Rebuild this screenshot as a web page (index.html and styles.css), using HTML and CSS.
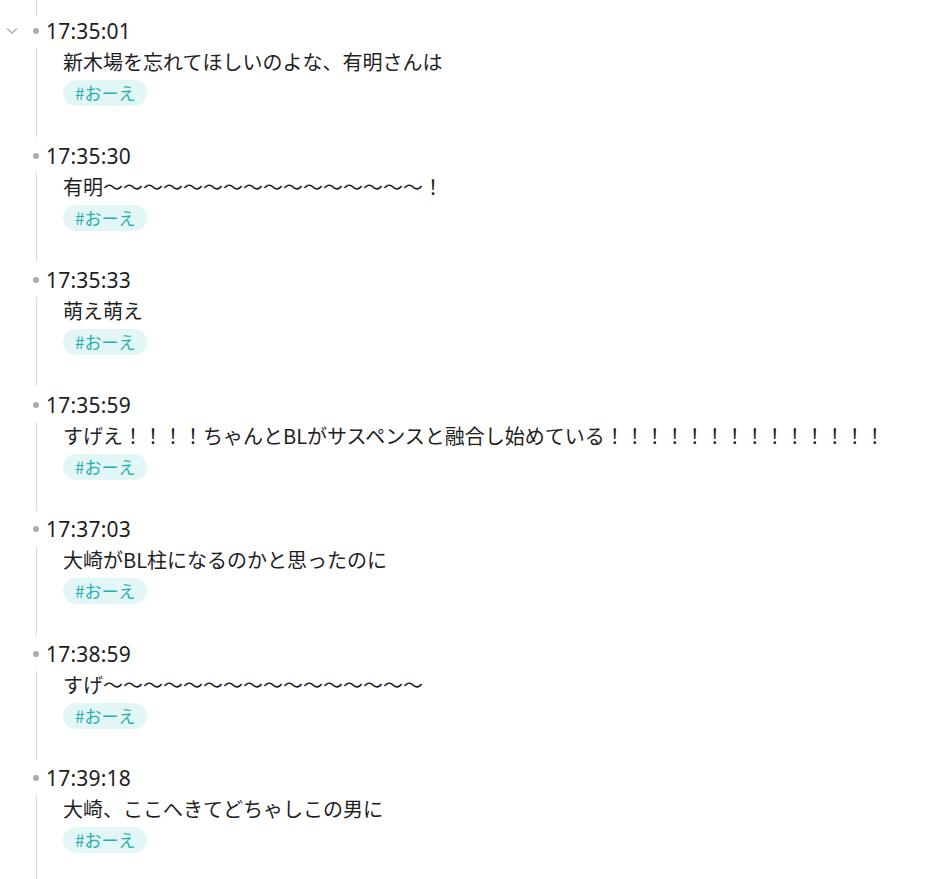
FILE: index.html
```html
<!DOCTYPE html>
<html lang="ja">
<head>
    <meta charset="UTF-8">
    <meta name="viewport" content="width=device-width, initial-scale=1.0">
    <title>Journal</title>
    <link rel="stylesheet" href="styles.css">
</head>
<body>

    <div id="outline">
        <div class="topGuide"></div>

        <div class="block">
            <div class="row">
                <span class="toggle">
                    <svg width="12" height="8" viewBox="0 0 12 8"><polyline points="1,1.5 6,6 11,1.5" fill="none" stroke="#b0b0b0" stroke-width="1.6"/></svg>
                </span>
                <span class="bullet"></span>
                <span class="time">17:35:01</span>
            </div>
            <div class="children">
                <div class="text">新木場を忘れてほしいのよな、有明さんは</div>
                <span class="tag">#おーえ</span>
            </div>
        </div>

        <div class="block">
            <div class="row">
                <span class="toggle"></span>
                <span class="bullet"></span>
                <span class="time">17:35:30</span>
            </div>
            <div class="children">
                <div class="text">有明～～～～～～～～～～～～～～～～！</div>
                <span class="tag">#おーえ</span>
            </div>
        </div>

        <div class="block">
            <div class="row">
                <span class="toggle"></span>
                <span class="bullet"></span>
                <span class="time">17:35:33</span>
            </div>
            <div class="children">
                <div class="text">萌え萌え</div>
                <span class="tag">#おーえ</span>
            </div>
        </div>

        <div class="block">
            <div class="row">
                <span class="toggle"></span>
                <span class="bullet"></span>
                <span class="time">17:35:59</span>
            </div>
            <div class="children">
                <div class="text">すげえ！！！！ちゃんとBLがサスペンスと融合し始めている！！！！！！！！！！！！！！</div>
                <span class="tag">#おーえ</span>
            </div>
        </div>

        <div class="block">
            <div class="row">
                <span class="toggle"></span>
                <span class="bullet"></span>
                <span class="time">17:37:03</span>
            </div>
            <div class="children">
                <div class="text">大崎がBL柱になるのかと思ったのに</div>
                <span class="tag">#おーえ</span>
            </div>
        </div>

        <div class="block">
            <div class="row">
                <span class="toggle"></span>
                <span class="bullet"></span>
                <span class="time">17:38:59</span>
            </div>
            <div class="children">
                <div class="text">すげ～～～～～～～～～～～～～～～～</div>
                <span class="tag">#おーえ</span>
            </div>
        </div>

        <div class="block">
            <div class="row">
                <span class="toggle"></span>
                <span class="bullet"></span>
                <span class="time">17:39:18</span>
            </div>
            <div class="children">
                <div class="text">大崎、ここへきてどちゃしこの男に</div>
                <span class="tag">#おーえ</span>
            </div>
        </div>
    </div>

</body>
</html>
```

FILE: styles.css
```css
body {
    margin: 0;
    background: #ffffff;
    color: #1e1e1e;
    font-family: "Noto Sans", "Noto Sans CJK JP", sans-serif;
}

#outline {
    width: 938px;
}

.topGuide {
    height: 16px;
    margin-left: 36px;
    border-left: 1px solid #dcdcdc;
}

.block {
    margin-bottom: 3.5px;
}

.row {
    display: flex;
    align-items: center;
    height: 30px;
}

.toggle {
    width: 24px;
    height: 30px;
    display: flex;
    align-items: center;
    justify-content: center;
}

.bullet {
    width: 6px;
    height: 6px;
    border-radius: 50%;
    background: #ababab;
    margin-left: 9px;
    margin-right: 7px;
}

.time {
    font-size: 21px;
    line-height: 30px;
    letter-spacing: 0.2px;
}

.children {
    margin-top: 2px;
    margin-left: 36px;
    padding-left: 26px;
    height: 89px;
    border-left: 1px solid #dcdcdc;
}

.text {
    font-family: "Noto Sans CJK JP", sans-serif;
    font-size: 20px;
    line-height: 28px;
    white-space: nowrap;
}

.tag {
    display: inline-block;
    margin-top: 4px;
    height: 26px;
    line-height: 26px;
    padding: 0 12px;
    border-radius: 13px;
    background: #e2f6f6;
    color: #27aeae;
    font-family: "Noto Sans CJK JP", sans-serif;
    font-size: 17px;
}
```
